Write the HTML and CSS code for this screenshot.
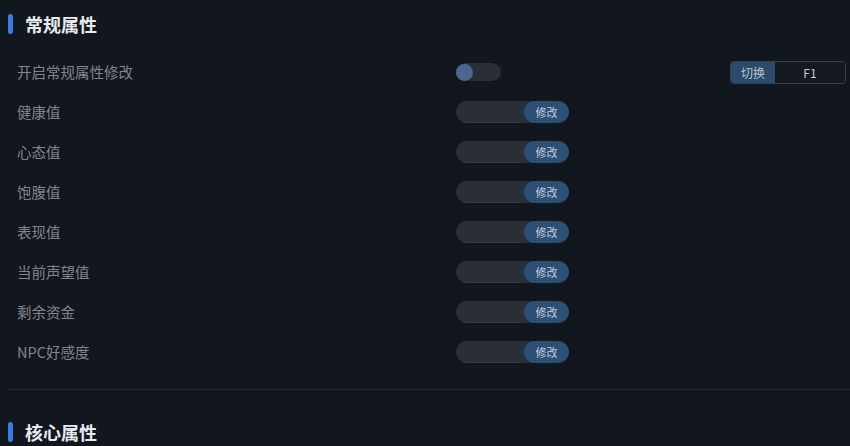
FILE: index.html
```html
<!DOCTYPE html>
<html lang="zh-CN">
<head>
    <meta charset="UTF-8">
    <meta name="viewport" content="width=device-width, initial-scale=1.0">
    <title>修改器</title>
    <link rel="stylesheet" href="styles.css">
</head>
<body>

    <!-- 常规属性 -->
    <div class="section">
        <h2 class="section-title">常规属性</h2>

        <div class="row">
            <span class="label">开启常规属性修改</span>
            <div class="switch"><span class="knob"></span></div>
            <div class="hotkey">
                <span class="hotkey-name">切换</span>
                <span class="hotkey-key">F1</span>
            </div>
        </div>

        <div class="row">
            <span class="label">健康值</span>
            <div class="edit"><input type="text"><button class="edit-btn">修改</button></div>
        </div>
        <div class="row">
            <span class="label">心态值</span>
            <div class="edit"><input type="text"><button class="edit-btn">修改</button></div>
        </div>
        <div class="row">
            <span class="label">饱腹值</span>
            <div class="edit"><input type="text"><button class="edit-btn">修改</button></div>
        </div>
        <div class="row">
            <span class="label">表现值</span>
            <div class="edit"><input type="text"><button class="edit-btn">修改</button></div>
        </div>
        <div class="row">
            <span class="label">当前声望值</span>
            <div class="edit"><input type="text"><button class="edit-btn">修改</button></div>
        </div>
        <div class="row">
            <span class="label">剩余资金</span>
            <div class="edit"><input type="text"><button class="edit-btn">修改</button></div>
        </div>
        <div class="row">
            <span class="label">NPC好感度</span>
            <div class="edit"><input type="text"><button class="edit-btn">修改</button></div>
        </div>
    </div>

    <hr class="divider">

    <!-- 核心属性 -->
    <div class="section">
        <h2 class="section-title">核心属性</h2>
    </div>

</body>
</html>
```

FILE: styles.css
```css
body {
    margin: 0;
    background: #12161e;
    font-family: "Noto Sans CJK SC", "Noto Sans", sans-serif;
    color: #80858e;
    height: 446px;
    overflow: hidden;
}
.section {
    padding: 14px 0 0 8px;
}
.section-title {
    display: flex;
    align-items: center;
    gap: 12px;
    height: 20px;
    margin: 0 0 18px;
    font-size: 18px;
    font-weight: 700;
    color: #e6e9ee;
}
.section-title::before {
    content: "";
    width: 5px;
    height: 20px;
    border-radius: 3px;
    background: #3b7ddd;
}
.row {
    display: flex;
    align-items: center;
    height: 40px;
}
.label {
    width: 439px;
    padding-left: 9px;
    padding-bottom: 2px;
    font-size: 14.5px;
    color: #80858e;
}
.switch {
    width: 45px;
    height: 18px;
    border-radius: 9px;
    background: #2a2e36;
    display: flex;
    align-items: center;
}
.knob {
    width: 17px;
    height: 17px;
    border-radius: 50%;
    background: #4b6791;
}
.hotkey {
    display: flex;
    margin-left: auto;
    margin-right: 4px;
    width: 116px;
    height: 23px;
    border: 1px solid #34404e;
    border-radius: 4px;
    overflow: hidden;
    box-sizing: border-box;
    font-size: 12px;
}
.hotkey-name {
    width: 44px;
    background: #2b4a6c;
    color: #b9c4d2;
    display: flex;
    align-items: center;
    justify-content: center;
}
.hotkey-key {
    flex: 1;
    background: #141920;
    color: #c3cad3;
    display: flex;
    align-items: center;
    justify-content: center;
}
.edit {
    display: flex;
    width: 113px;
    height: 22px;
    border-radius: 11px;
    overflow: hidden;
    background: #2a2e36;
}
.edit input {
    flex: 1;
    min-width: 0;
    border: none;
    background: transparent;
    box-shadow: inset 0 -1px 0 #353a43;
    outline: none;
}
.edit-btn {
    width: 45px;
    border: none;
    border-radius: 11px;
    background: #2e4f76;
    color: #c8d0da;
    font-family: inherit;
    font-size: 11px;
    padding: 0;
}
.divider {
    margin: 17px 0 0 8px;
    border: none;
    border-top: 1px solid #242932;
}
.divider + .section {
    padding-top: 32px;
}
```
